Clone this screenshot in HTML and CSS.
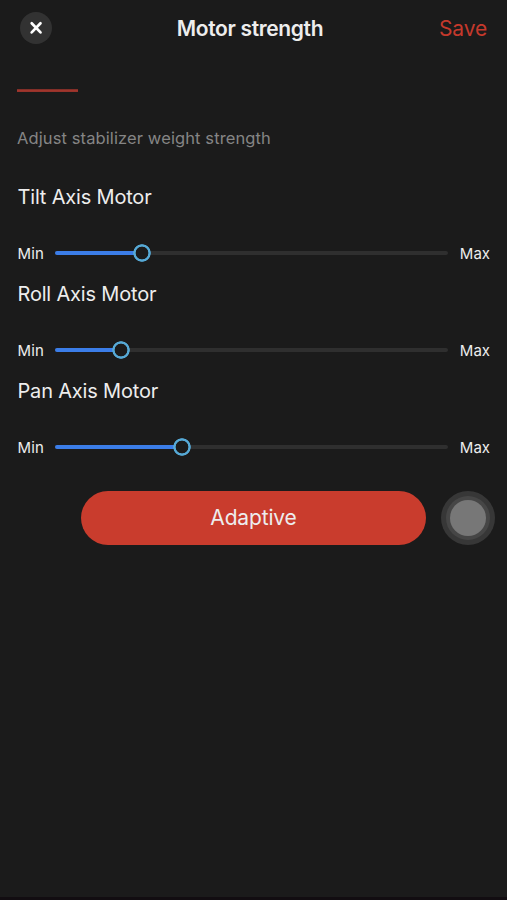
FILE: index.html
```html
<!DOCTYPE html>
<html lang="en">
<head>
<meta charset="utf-8">
<title>Motor strength</title>
<link rel="stylesheet" href="styles.css">
</head>
<body>
<div class="screen">
  <header class="header">
    <button class="close" aria-label="Close"><svg viewBox="0 0 32 32" width="32" height="32"><path d="M11.7 11.2l8.8 9.2m0-9.2l-8.8 9.2" stroke="#fff" stroke-width="2.7" stroke-linecap="round"/></svg></button>
    <h1 class="title">Motor strength</h1>
    <button class="save">Save</button>
  </header>
  <div class="tab"></div>
  <p class="hint">Adjust stabilizer weight strength</p>
  <section class="axis">
    <h2 class="name">Tilt Axis Motor</h2>
    <div class="row"><span class="min">Min</span><div class="track"><div class="fill" style="width:87px"></div><div class="knob"></div></div><span class="max">Max</span></div>
  </section>
  <section class="axis">
    <h2 class="name">Roll Axis Motor</h2>
    <div class="row"><span class="min">Min</span><div class="track"><div class="fill" style="width:66px"></div><div class="knob"></div></div><span class="max">Max</span></div>
  </section>
  <section class="axis">
    <h2 class="name">Pan Axis Motor</h2>
    <div class="row"><span class="min">Min</span><div class="track"><div class="fill" style="width:127px"></div><div class="knob"></div></div><span class="max">Max</span></div>
  </section>
  <div class="actions">
    <button class="adaptive">Adaptive</button>
    <div class="assist"><div class="ring"><div class="dot"></div></div></div>
  </div>
  <div class="edge"></div>
</div>
</body>
</html>
```
FILE: styles.css
```css
* { box-sizing: border-box; }
body { margin: 0; background: #1b1b1b; color: #ededed; font-family: Inter, "Liberation Sans", sans-serif; }
button { border: 0; padding: 0; background: none; font: inherit; color: inherit; }
h1, h2, p { margin: 0; font-weight: 400; white-space: nowrap; }
.screen { height: 900px; display: flex; flex-direction: column; overflow: hidden; }
.header { height: 56px; padding: 0 20px; display: grid; grid-template-columns: 73px 1fr 80px; align-items: center; }
.close { width: 32px; height: 32px; border-radius: 50%; background: #323232; }
.close svg { display: block; }
.title { font-size: 21px; font-weight: 600; text-align: center; letter-spacing: -.35px; }
.save { text-align: right; color: #c5392c; font-size: 21px; letter-spacing: -.15px; }
.tab { width: 61px; height: 3px; margin: 33px 0 0 17px; background: linear-gradient(#6b2a25, #a1352c 40%, #a1352c 80%, #6b2a25); }
.hint { margin: 33px 0 15px 17px; height: 26px; line-height: 26px; font-size: 16.5px; letter-spacing: .11px; color: #858585; }
.axis { height: 97px; padding: 0 17px; }
.name { height: 62px; line-height: 62px; margin-bottom: 15px; padding-left: .5px; font-size: 20px; letter-spacing: -.18px; }
.row { height: 20px; display: grid; grid-template-columns: 38px 393px 1fr; align-items: center; font-size: 15px; }
.min { letter-spacing: .2px; padding-left: .4px; }
.max { text-align: right; }
.track { height: 4px; border-radius: 2px; background: #2f2f2f; display: flex; align-items: center; }
.fill { height: 4px; border-radius: 2px; background: #3b7de8; }
.knob { width: 18px; height: 18px; flex: none; margin-left: -9px; background: radial-gradient(circle, #1b1b1b 6px, #56a9d6 6.7px, #56a9d6 8.4px, transparent 9px); }
.actions { display: flex; align-items: center; height: 55px; padding-left: 81px; margin-top: 33px; }
.adaptive { width: 345px; height: 54px; border-radius: 27px; background: #c93c2d; font-size: 21px; letter-spacing: -.15px; }
.assist { width: 54px; height: 54px; margin-left: 15px; padding: 5px; border-radius: 50%; background: #373737; }
.ring { width: 44px; height: 44px; padding: 4px; border-radius: 50%; background: #464646; }
.dot { width: 36px; height: 36px; border-radius: 50%; background: #777; }
.edge { height: 3px; margin-top: auto; background: #120d11; }
```
